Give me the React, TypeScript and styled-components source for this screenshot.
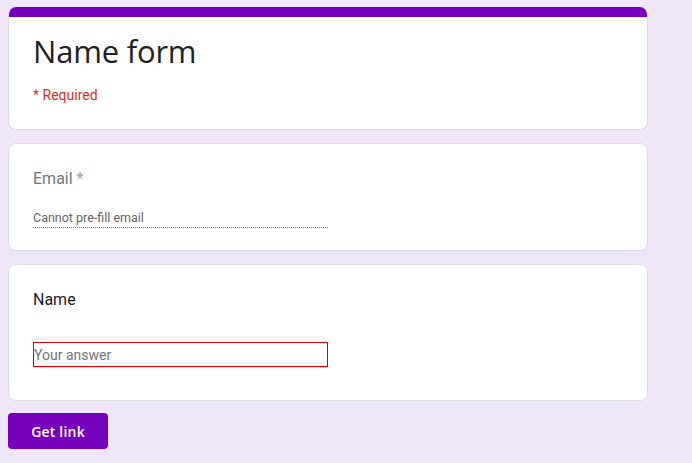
import React from "react";
import styled, { createGlobalStyle } from "styled-components";

const Global = createGlobalStyle`
  html, body { margin: 0; padding: 0; background: #f0e6f9; }
  body { font-family: Roboto, "Liberation Sans", sans-serif; }
`;

const Page = styled.div`
  width: 640px;
  padding: 7px 0 0 8px;
  display: flex;
  flex-direction: column;
  gap: 13px;
  min-height: 456px;
`;

const Card = styled.div<{ $accent?: boolean }>`
  box-sizing: border-box;
  background: #fff;
  border: 1px solid #dadce0;
  border-radius: 8px;
  overflow: hidden;
  ${(p) => (p.$accent ? "border-top: none;" : "")}
`;

const AccentBar = styled.div`
  height: 10px;
  background: #7600bc;
`;

const CardBody = styled.div<{ $h: number }>`
  box-sizing: border-box;
  height: ${(p) => p.$h}px;
  padding: 0 24px;
  display: flex;
  flex-direction: column;
`;

const Title = styled.h1`
  margin: 14px 0 0;
  font-family: "Open Sans", Lato, sans-serif;
  font-weight: 400;
  font-size: 31px;
  line-height: 40px;
  color: #202124;
  letter-spacing: -0.2px;
`;

const Required = styled.div`
  margin-top: 15px;
  font-size: 14px;
  line-height: 18px;
  color: #d93025;
`;

const Label = styled.div<{ $muted?: boolean }>`
  margin-top: 23px;
  font-size: 16px;
  line-height: 24px;
  color: ${(p) => (p.$muted ? "#70757a" : "#202124")};
`;

const Star = styled.span`
  color: #9aa0a6;
  margin-left: 4px;
`;

const Prefill = styled.div`
  margin-top: 19px;
  width: 295px;
  font-size: 12.5px;
  line-height: 16px;
  color: #5f6368;
  border-bottom: 1px dotted #80868b;
  padding-bottom: 1px;
`;

const AnswerWrap = styled.div`
  margin-top: 30px;
  width: 295px;
  border-bottom: 1px solid #e0e0e0;
`;

const AnswerBox = styled.div`
  box-sizing: border-box;
  width: 295px;
  height: 25px;
  border: 1px solid #d50000;
  background: #fff;
  display: flex;
`;

const Answer = styled.input`
  flex: 1;
  min-width: 0;
  margin: 0;
  padding: 0;
  border: 0;
  outline: none;
  background: transparent;
  font-family: Roboto, "Liberation Sans", sans-serif;
  font-size: 14px;
  color: #202124;
  &::placeholder { color: #70757a; }
`;

const Button = styled.button`
  align-self: flex-start;
  margin-top: -1px;
  width: 100px;
  height: 36px;
  border: none;
  border-radius: 4px;
  background: #7600bc;
  color: #fff;
  font-family: "Open Sans", Lato, sans-serif;
  font-weight: 600;
  font-size: 14px;
  letter-spacing: 0.2px;
  cursor: pointer;
`;

export default function App() {
  return (
    <>
      <Global />
      <Page>
        <Card $accent>
          <AccentBar />
          <CardBody $h={112}>
            <Title>Name form</Title>
            <Required>* Required</Required>
          </CardBody>
        </Card>
        <Card>
          <CardBody $h={106}>
            <Label $muted>
              Email<Star>*</Star>
            </Label>
            <Prefill>Cannot pre-fill email</Prefill>
          </CardBody>
        </Card>
        <Card>
          <CardBody $h={135}>
            <Label>Name</Label>
            <AnswerWrap>
              <AnswerBox>
                <Answer placeholder="Your answer" />
              </AnswerBox>
            </AnswerWrap>
          </CardBody>
        </Card>
        <Button>Get link</Button>
      </Page>
    </>
  );
}
